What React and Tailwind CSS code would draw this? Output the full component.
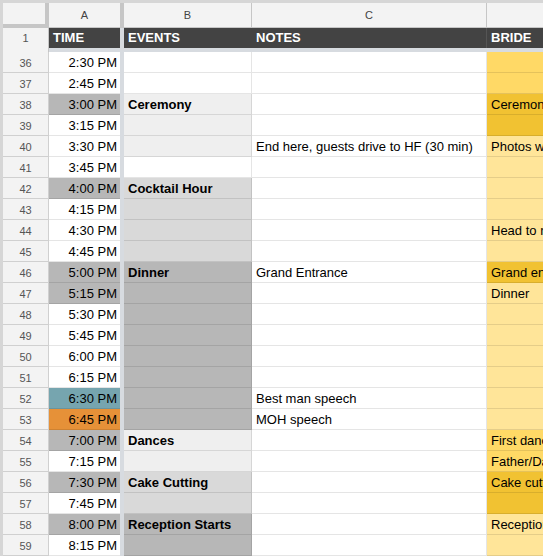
import React from "react";

const W = "bg-white";
const G1 = "bg-[#b7b7b7]";
const G2 = "bg-[#d9d9d9]";
const G3 = "bg-[#efefef]";
const Y1 = "bg-[#ffd966]";
const Y2 = "bg-[#f1c232]";
const Y3 = "bg-[#ffe599]";

const rows = [
  { n: 36, t: "2:30 PM", a: W, e: "", b: W, c: "", d: "", db: Y1 },
  { n: 37, t: "2:45 PM", a: W, e: "", b: W, c: "", d: "", db: Y1 },
  { n: 38, t: "3:00 PM", a: G1, e: "Ceremony", b: G3, c: "", d: "Ceremony", db: Y2 },
  { n: 39, t: "3:15 PM", a: W, e: "", b: G3, c: "", d: "", db: Y2 },
  { n: 40, t: "3:30 PM", a: W, e: "", b: G3, c: "End here, guests drive to HF (30 min)", d: "Photos with family", db: Y3 },
  { n: 41, t: "3:45 PM", a: W, e: "", b: W, c: "", d: "", db: Y3 },
  { n: 42, t: "4:00 PM", a: G1, e: "Cocktail Hour", b: G2, c: "", d: "", db: Y3 },
  { n: 43, t: "4:15 PM", a: W, e: "", b: G2, c: "", d: "", db: Y3 },
  { n: 44, t: "4:30 PM", a: W, e: "", b: G2, c: "", d: "Head to reception", db: Y3 },
  { n: 45, t: "4:45 PM", a: W, e: "", b: G2, c: "", d: "", db: Y3 },
  { n: 46, t: "5:00 PM", a: G1, e: "Dinner", b: G1, c: "Grand Entrance", d: "Grand entrance", db: Y2 },
  { n: 47, t: "5:15 PM", a: G1, e: "", b: G1, c: "", d: "Dinner", db: Y3 },
  { n: 48, t: "5:30 PM", a: W, e: "", b: G1, c: "", d: "", db: Y3 },
  { n: 49, t: "5:45 PM", a: W, e: "", b: G1, c: "", d: "", db: Y3 },
  { n: 50, t: "6:00 PM", a: W, e: "", b: G1, c: "", d: "", db: Y3 },
  { n: 51, t: "6:15 PM", a: W, e: "", b: G1, c: "", d: "", db: Y3 },
  { n: 52, t: "6:30 PM", a: "bg-[#76a5af]", e: "", b: G1, c: "Best man speech", d: "", db: Y3 },
  { n: 53, t: "6:45 PM", a: "bg-[#e69138]", e: "", b: G1, c: "MOH speech", d: "", db: Y3 },
  { n: 54, t: "7:00 PM", a: G1, e: "Dances", b: G3, c: "", d: "First dance", db: Y1 },
  { n: 55, t: "7:15 PM", a: W, e: "", b: G3, c: "", d: "Father/Daughter dance", db: Y1 },
  { n: 56, t: "7:30 PM", a: G1, e: "Cake Cutting", b: G2, c: "", d: "Cake cutting", db: Y2 },
  { n: 57, t: "7:45 PM", a: W, e: "", b: G2, c: "", d: "", db: Y2 },
  { n: 58, t: "8:00 PM", a: G1, e: "Reception Starts", b: G1, c: "", d: "Reception", db: Y3 },
  { n: 59, t: "8:15 PM", a: W, e: "", b: G1, c: "", d: "", db: Y3 },
];

export default function App() {
  return (
    <div
      className="w-[543px] h-[556px] overflow-hidden bg-[#d6d6d6] pt-[3px] pl-[3px] text-[13px] text-black"
      style={{ fontFamily: '"Liberation Sans", Arial, sans-serif' }}
    >
      <div className="flex flex-col bg-white w-full h-full">
        {/* Column letters */}
        <div className="flex h-[25px] shrink-0 bg-[#f3f3f3] text-[11px] text-[#444]">
          <div className="w-[46px] shrink-0 border-r-4 border-b-4 border-[#c6c6c6] bg-[#f3f3f3]" />
          <div className="w-[71px] shrink-0 flex items-center justify-center border-b border-[#c6c6c6]">A</div>
          <div className="w-[4px] shrink-0 bg-[#c6c6c6]" />
          <div className="w-[128px] shrink-0 flex items-center justify-center border-b border-r border-[#c6c6c6]">B</div>
          <div className="w-[235px] shrink-0 flex items-center justify-center border-b border-r border-[#c6c6c6]">C</div>
          <div className="flex-1 border-b border-[#c6c6c6]" />
        </div>
        {/* Row 1 header */}
        <div className="flex h-[20px] shrink-0">
          <div className="w-[46px] shrink-0 flex items-center justify-center bg-[#f3f3f3] border-r border-[#c6c6c6] text-[11px] text-[#555]">1</div>
          <div className="w-[71px] shrink-0 flex items-center bg-[#434343] text-white font-bold pl-[4px]">TIME</div>
          <div className="w-[4px] shrink-0 bg-[#d7dbe0]" />
          <div className="w-[128px] shrink-0 flex items-center bg-[#434343] text-white font-bold pl-[4px]">EVENTS</div>
          <div className="w-[235px] shrink-0 flex items-center bg-[#434343] text-white font-bold pl-[4px] border-r border-[#555]">NOTES</div>
          <div className="flex-1 flex items-center bg-[#434343] text-white font-bold pl-[4px]">BRIDE</div>
        </div>
        {/* Frozen divider */}
        <div className="flex h-[4px] shrink-0">
          <div className="w-[46px] shrink-0 bg-[#f3f3f3] border-r border-[#c6c6c6]" />
          <div className="flex-1 bg-[#d7dbe0]" />
        </div>
        {/* Body */}
        {rows.map((r) => (
          <div key={r.n} className="flex h-[21px] shrink-0">
            <div className="w-[46px] shrink-0 flex items-center justify-center pt-[2px] bg-[#f3f3f3] border-r border-b border-[#d0d0d0] text-[11px] text-[#555]">
              {r.n}
            </div>
            <div className={`w-[71px] shrink-0 flex items-center justify-end pr-[3px] pt-[2px] border-b border-black/10 ${r.a}`}>
              {r.t}
            </div>
            <div className="w-[4px] shrink-0 bg-[#d7dbe0]" />
            <div className={`w-[128px] shrink-0 flex items-center pl-[4px] pt-[2px] font-bold border-b border-r border-black/10 whitespace-nowrap overflow-hidden ${r.b}`}>
              {r.e}
            </div>
            <div className="w-[235px] shrink-0 flex items-center pl-[4px] pt-[2px] bg-white border-b border-r border-black/10 whitespace-nowrap overflow-hidden">
              {r.c}
            </div>
            <div className={`flex-1 flex items-center pl-[4px] pt-[2px] border-b border-black/10 whitespace-nowrap overflow-hidden ${r.db}`}>
              {r.d}
            </div>
          </div>
        ))}
      </div>
    </div>
  );
}
